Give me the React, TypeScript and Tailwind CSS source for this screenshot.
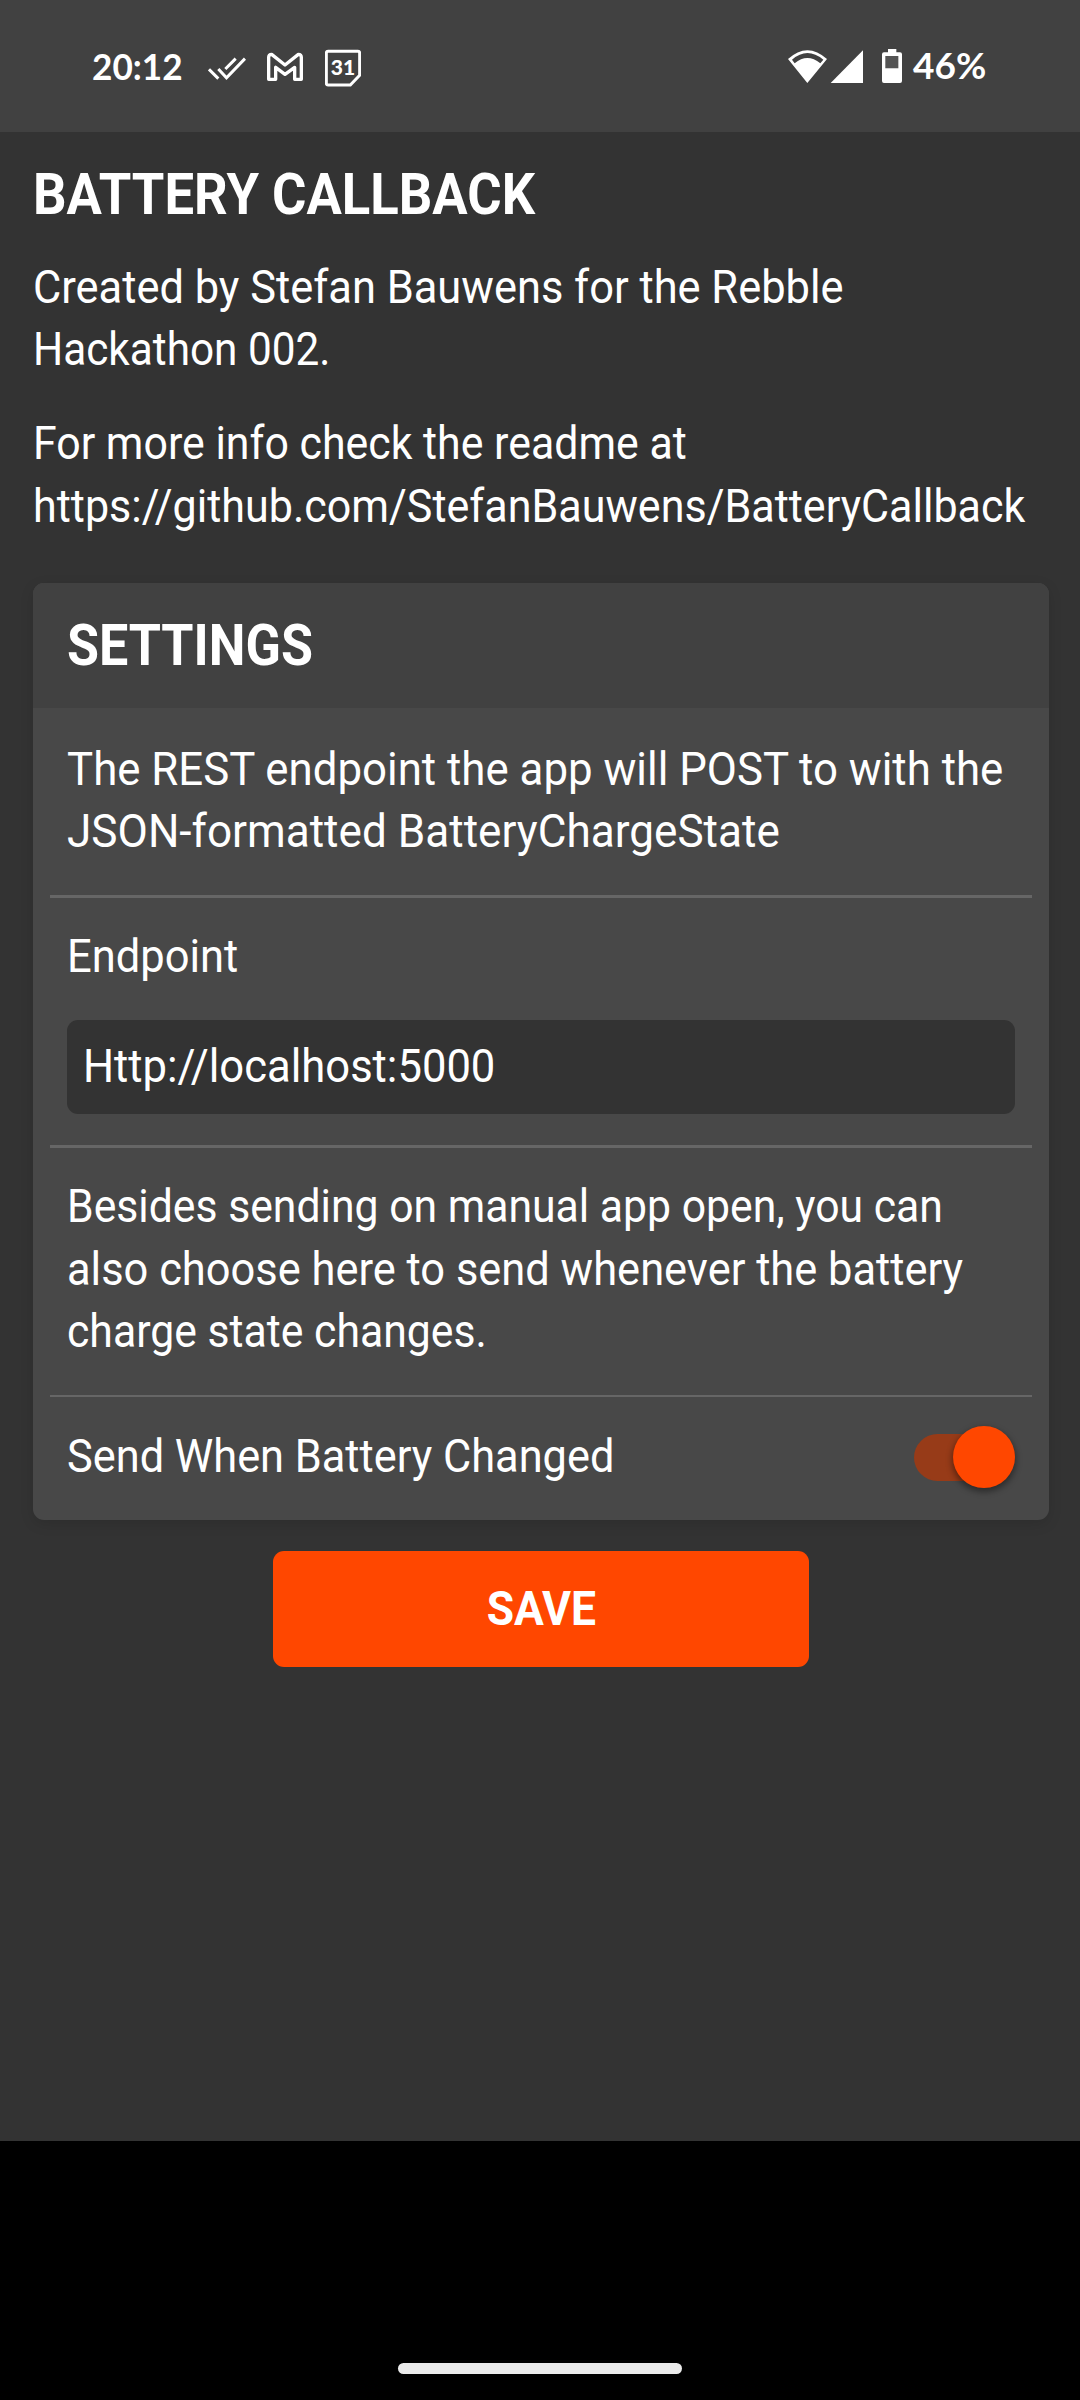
import type { ReactNode } from "react";

function Line({ children, className }: { children: ReactNode; className: string }) {
  return <span className={`block w-max origin-left whitespace-nowrap ${className}`}>{children}</span>;
}

function StatusBar() {
  return (
    <header className="flex h-[132px] items-start bg-[#414141] pl-[92px] pr-[93px] font-['Lato'] text-white">
      <span className="mt-[44px] w-[101px] origin-left scale-x-[0.95] text-[37px] leading-[44px] font-bold">20:12</span>
      <svg className="mt-[49px] ml-[15px] h-[40px] w-[38px] fill-none stroke-white" viewBox="444 87 114 120" strokeWidth="9">
        <path d="M447 148l28 28M475 147l24.500 26.500L555 116M496 147l31-31" />
      </svg>
      <svg className="mt-[49px] ml-[21px] h-[40px] w-[36px] fill-none stroke-white" viewBox="621 87 108 120" strokeWidth="10">
        <path strokeLinejoin="round" d="M626 178V112q0-9 9-9l40 32 40-32q9 0 9 9v66h-20v-36l-29 21-28-21v36z" />
      </svg>
      <svg className="mt-[49px] ml-[22px] h-[40px] w-[36px] fill-none stroke-white" viewBox="795 87 108 120" strokeWidth="9">
        <path d="M804 94h90q5 0 5 5v67l-28 29h-67q-5 0-5-5V99q0-5 5-5z" />
        <text x="849" y="166" textAnchor="middle" className="fill-white stroke-none font-['Lato'] text-[63px] font-black">31</text>
      </svg>
      <svg className="mt-[49px] ml-auto h-[35px] w-[76px] fill-white" viewBox="84 87 228 105">
        <path fillRule="evenodd" d="M142 189L84 117Q142 64 201 117zM96 119Q142 79 190 119L181 130Q142 98 104 130z" />
        <path d="M212 189L309 91v98z" />
      </svg>
      <svg className="mt-[49px] ml-[18px] h-[35px] w-[20px] fill-white" viewBox="366 87 60 105">
        <path fillRule="evenodd" d="M384 87h25v10h11q6 0 6 6v80q0 6-6 6h-48q-6 0-6-6v-80q0-6 6-6h12zM376 108v37h39v-37z" />
        <path className="fill-white/10" d="M376 108h39v37h-39z" />
      </svg>
      <span className="mt-[43px] ml-[11px] w-[74px] text-[37px] leading-[44px] font-bold">46%</span>
    </header>
  );
}

function Toggle() {
  return (
    <span role="switch" aria-checked="true" className="flex h-[47px] w-[101px] items-center justify-end rounded-full bg-[#973b18]">
      <span className="-mt-px size-[62px] shrink-0 rounded-full bg-[#ff4700] shadow-[0_3px_6px_1px_rgba(0,0,0,0.4)]" />
    </span>
  );
}

export default function App() {
  return (
    <div className="flex h-[2400px] w-[1080px] flex-col overflow-hidden bg-black font-['Roboto']">
      <StatusBar />
      <main className="h-[2009px] bg-[#333333] px-[33px] pt-[32px] text-[46px] leading-[62.5px] text-white">
        <h1 className="h-[61px] text-[57px] leading-[62px] font-bold">
          <Line className="scale-x-[0.923]">BATTERY CALLBACK</Line>
        </h1>
        <p className="mt-[31px] h-[125px] leading-[62px]">
          <Line className="scale-x-[0.944]">Created by Stefan Bauwens for the Rebble</Line>
          <Line className="scale-x-[0.92]">Hackathon 002.</Line>
        </p>
        <p className="mt-[31px]">
          <Line className="scale-x-[0.932]">For more info check the readme at</Line>
          <Line className="scale-x-[0.936]">https://github.com/StefanBauwens/BatteryCallback</Line>
        </p>

        <section className="mt-[46px] w-[1016px] rounded-[11px] bg-[#484848] shadow-[0_4px_14px_rgba(0,0,0,0.12)]">
          <h2 className="flex h-[125px] items-center rounded-t-[11px] bg-[#414141] px-[34px] text-[57px] leading-[62px] font-bold">
            <Line className="scale-x-[0.912]">SETTINGS</Line>
          </h2>
          <div className="mx-[17px] h-[190px] border-b-3 border-[#666666] px-[17px] pt-[30px] leading-[62px]">
            <Line className="scale-x-[0.952]">The REST endpoint the app will POST to with the</Line>
            <Line className="scale-x-[0.959]">JSON-formatted BatteryChargeState</Line>
          </div>
          <div className="mx-[17px] h-[250px] border-b-3 border-[#666666] px-[17px] pt-[27px]">
            <label className="block">
              <Line className="scale-x-[0.945]">Endpoint</Line>
            </label>
            <div className="mt-[32px] h-[94px] w-[948px] rounded-[11px] bg-[#333333] pt-[15px] pl-[16px]">
              <Line className="scale-x-[0.947]">Http://localhost:5000</Line>
            </div>
          </div>
          <div className="mx-[17px] h-[249px] border-b-2 border-[#666666] px-[17px] pt-[27px]">
            <Line className="scale-x-[0.929]">Besides sending on manual app open, you can</Line>
            <Line className="scale-x-[0.944]">also choose here to send whenever the battery</Line>
            <Line className="scale-x-[0.929]">charge state changes.</Line>
          </div>
          <div className="flex h-[123px] items-center justify-between px-[34px] pb-[2px]">
            <Line className="pb-[2px] scale-x-[0.942]">Send When Battery Changed</Line>
            <Toggle />
          </div>
        </section>

        <button className="mt-[31px] ml-[240px] flex h-[116px] w-[536px] items-center justify-center rounded-[11px] bg-[#ff4700] text-[49px] font-bold">
          <span className="scale-x-[0.906]">SAVE</span>
        </button>
      </main>
      <div className="mx-auto mt-auto mb-[26px] h-[11px] w-[284px] rounded-full bg-[#ebebeb]" />
    </div>
  );
}
